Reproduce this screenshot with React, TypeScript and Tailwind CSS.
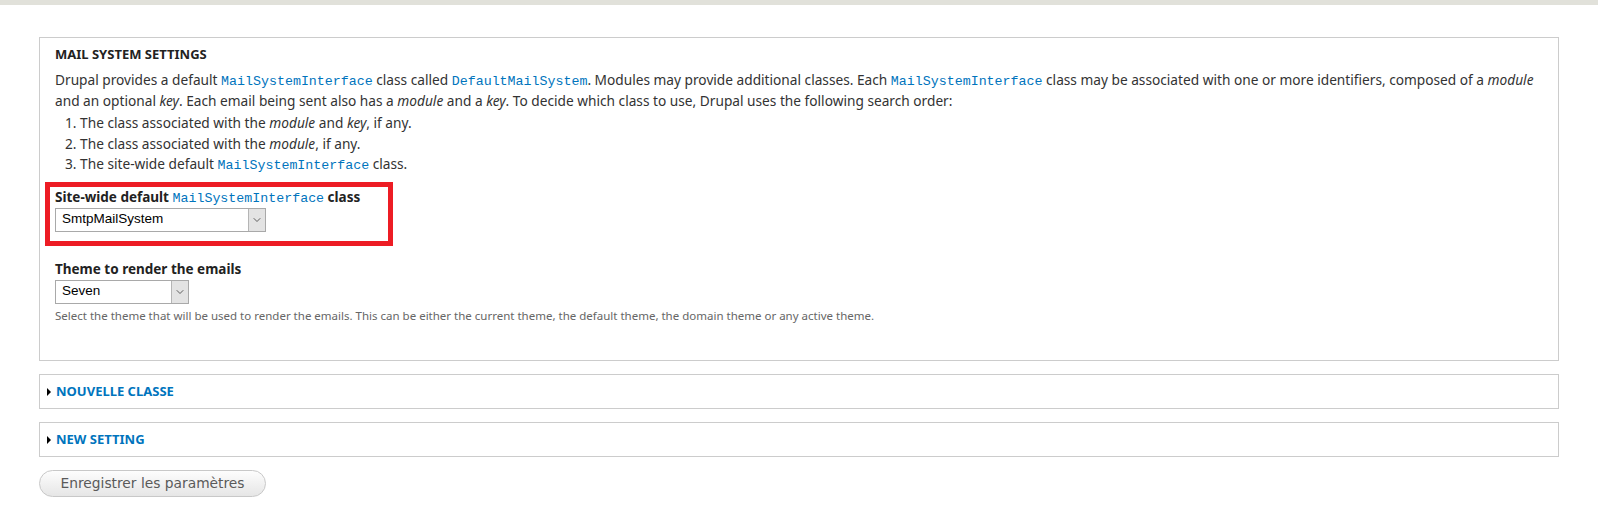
import { ChevronDown } from 'lucide-react';

const sans = "font-['Noto_Sans',sans-serif]";
const mono = "font-['Liberation_Mono',monospace] text-[#0074bd] leading-none";

function Code({ children, bold = false }: { children: string; bold?: boolean }) {
  return <span className={`${mono} text-[13.3px] ${bold ? 'font-normal' : ''}`}>{children}</span>;
}

function Select({ value, width }: { value: string; width: string }) {
  return (
    <div className={`flex h-6 ${width} border border-[#a9a9a9] bg-white`}>
      <div className="flex flex-1 items-center pl-[6px] font-['Liberation_Sans',sans-serif] text-[13.5px] text-black">{value}</div>
      <div className="grid w-[17px] place-items-center border-l border-[#b5b5b5] bg-[#e3e3e3]">
        <ChevronDown size={12} strokeWidth={1.5} className="text-[#333]" />
      </div>
    </div>
  );
}

function Collapsed({ title }: { title: string }) {
  return (
    <div className="flex h-[35px] items-center border border-[#ccc] pl-[7px]">
      <span className="mr-[5px] h-0 w-0 border-y-[4px] border-l-[4px] border-y-transparent border-l-black" />
      <span className="text-[13px] font-bold text-[#0074bd]">{title}</span>
    </div>
  );
}

export default function App() {
  return (
    <div className={`min-h-[531px] bg-white ${sans} text-[#333]`}>
      <div className="h-[5px] bg-[#e1e1da]" />
      <div className="px-[39px] pt-[32px]">
        <div className="h-[324px] border border-[#ccc] pl-[15px] pr-4 pt-[8px]">
          <h2 className="text-[13px] font-bold leading-4 text-[#222]">MAIL SYSTEM SETTINGS</h2>
          <div className="mt-[8px] text-[13.7px] leading-[20.5px]">
            <div className="whitespace-nowrap">
              Drupal provides a default <Code>MailSystemInterface</Code> class called <Code>DefaultMailSystem</Code>. Modules may
              provide additional classes. Each <Code>MailSystemInterface</Code> class may be associated with one or more identifiers,
              composed of a <em>module</em>
            </div>
            <div className="whitespace-nowrap">
              and an optional <em>key</em>. Each email being sent also has a <em>module</em> and a <em>key</em>. To decide which class to
              use, Drupal uses the following search order:
            </div>
          </div>
          <ol className="mt-[2px] pl-[10px] text-[13.7px] leading-[20.5px]">
            <li>1. The class associated with the <em>module</em> and <em>key</em>, if any.</li>
            <li>2. The class associated with the <em>module</em>, if any.</li>
            <li>3. The site-wide default <Code>MailSystemInterface</Code> class.</li>
          </ol>
          <div className="ml-[-10px] mt-[7px] w-[348px] border-[5px] border-[#ed1c24] pb-[9px] pl-[5px] pt-[1px]">
            <div className="text-[13.5px] font-bold leading-[18px] text-[#222]">
              Site-wide default <Code bold>MailSystemInterface</Code> class
            </div>
            <div className="mt-[2px]">
              <Select value="SmtpMailSystem" width="w-[211px]" />
            </div>
          </div>
          <div className="mt-[14px] text-[13.5px] font-bold leading-[18px] text-[#222]">Theme to render the emails</div>
          <div className="mt-[2px]">
            <Select value="Seven" width="w-[134px]" />
          </div>
          <p className="mt-[4px] text-[11.5px] leading-4 text-[#666]">
            Select the theme that will be used to render the emails. This can be either the current theme, the default theme, the
            domain theme or any active theme.
          </p>
        </div>
        <div className="mt-[13px] flex flex-col gap-[13px]">
          <Collapsed title="NOUVELLE CLASSE" />
          <Collapsed title="NEW SETTING" />
        </div>
        <button className="mt-[13px] h-[27px] w-[227px] rounded-[14px] border border-[#c8c8c8] bg-gradient-to-b from-[#fdfdfd] to-[#e6e6e6] font-['DejaVu_Sans',sans-serif] text-[13.8px] text-[#5a5a5a]">
          Enregistrer les paramètres
        </button>
      </div>
    </div>
  );
}
